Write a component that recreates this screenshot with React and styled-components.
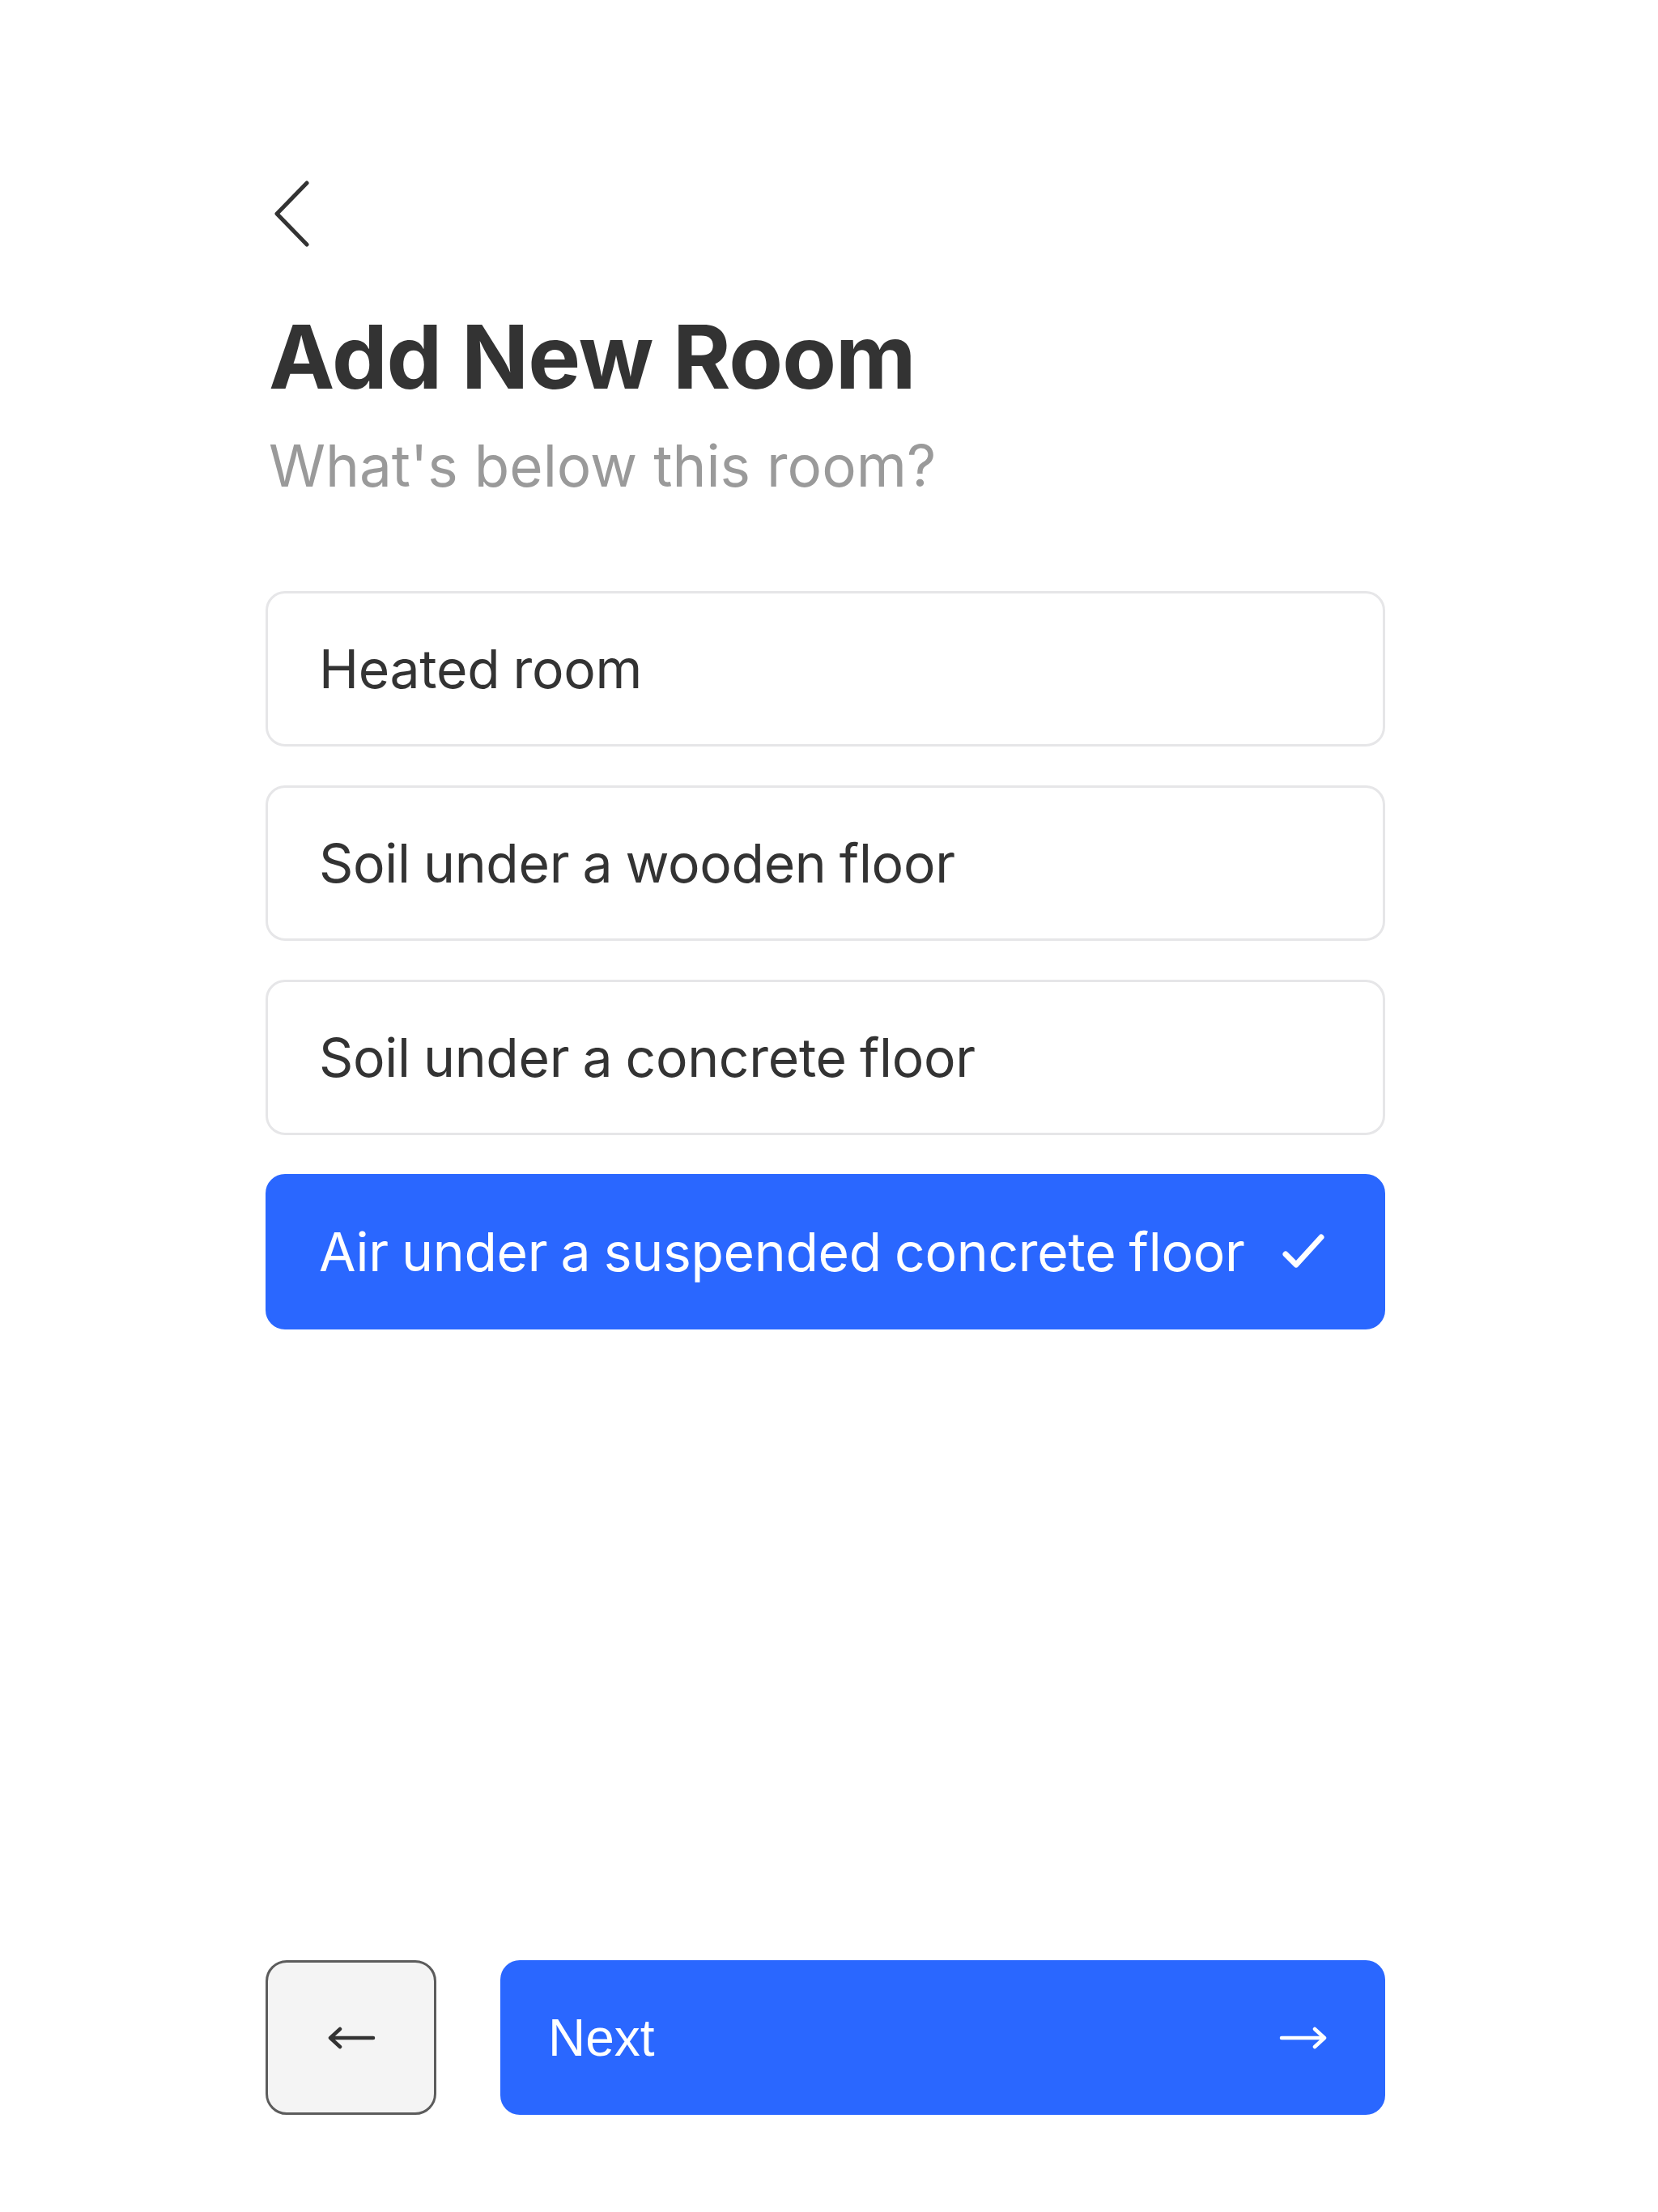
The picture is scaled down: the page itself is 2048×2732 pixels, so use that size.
import styled, { createGlobalStyle } from "styled-components";

const options = [
  "Heated room",
  "Soil under a wooden floor",
  "Soil under a concrete floor",
  "Air under a suspended concrete floor",
];

const selected = 3;

function ArrowIcon({ dir = "left", color }) {
  const d =
    dir === "left"
      ? "M4 14 H57 M16 3 L4 14 L16 25"
      : "M3 14 H56 M44 3 L56 14 L44 25";
  return (
    <svg width="60" height="28" viewBox="0 0 60 28" fill="none">
      <path
        d={d}
        stroke={color}
        strokeWidth="4.5"
        strokeLinecap="round"
        strokeLinejoin="round"
      />
    </svg>
  );
}

export default function App() {
  return (
    <>
      <GlobalStyle />
      <Page>
        <BackLink aria-label="Back">
          <svg width="52" height="84" viewBox="0 0 52 84" fill="none">
            <path
              d="M45 4 L8 42 L45 80"
              stroke="#333"
              strokeWidth="5"
              strokeLinecap="round"
              strokeLinejoin="round"
            />
          </svg>
        </BackLink>
        <Title>Add New Room</Title>
        <Subtitle>What's below this room?</Subtitle>
        <OptionList>
          {options.map((label, i) => (
            <Option key={label} $active={i === selected}>
              <span>{label}</span>
              {i === selected && (
                <svg width="56" height="50" viewBox="0 0 56 50" fill="none">
                  <path
                    d="M6 28 L19 41 L50 7"
                    stroke="#fff"
                    strokeWidth="7"
                    strokeLinecap="round"
                    strokeLinejoin="round"
                  />
                </svg>
              )}
            </Option>
          ))}
        </OptionList>
        <Footer>
          <PrevButton aria-label="Previous">
            <ArrowIcon dir="left" color="#333333" />
          </PrevButton>
          <NextButton>
            <span>Next</span>
            <ArrowIcon dir="right" color="#ffffff" />
          </NextButton>
        </Footer>
      </Page>
    </>
  );
}

const GlobalStyle = createGlobalStyle`
  body {
    margin: 0;
    background: #ffffff;
    font-family: "Inter", "Noto Sans", sans-serif;
  }
`;

const Page = styled.div`
  width: 2048px;
  min-height: 2732px;
  box-sizing: border-box;
  padding: 222px 337px 120px 328px;
  display: flex;
  flex-direction: column;
`;

const BackLink = styled.button`
  width: 52px;
  height: 84px;
  padding: 0;
  margin-left: 6px;
  border: none;
  background: none;
  display: flex;
`;

const Title = styled.h1`
  margin: 68px 0 0 4px;
  font-size: 109px;
  line-height: 132px;
  font-weight: 700;
  letter-spacing: -1px;
  color: #333333;
`;

const Subtitle = styled.p`
  margin: 24px 0 0 4px;
  font-size: 71px;
  line-height: 90px;
  font-weight: 400;
  color: #9a9a9a;
`;

const OptionList = styled.div`
  margin-top: 110px;
  display: flex;
  flex-direction: column;
  gap: 48px;
`;

const Option = styled.div`
  height: 192px;
  box-sizing: border-box;
  padding: 0 70px 0 63px;
  display: flex;
  align-items: center;
  justify-content: space-between;
  border-radius: 24px;
  border: 3px solid ${(p) => (p.$active ? "#2a67ff" : "#e6e6e8")};
  background: ${(p) => (p.$active ? "#2a67ff" : "#ffffff")};
  color: ${(p) => (p.$active ? "#ffffff" : "#333333")};
  font-size: 66px;
  font-weight: 400;
  letter-spacing: -0.3px;
  word-spacing: -2px;
`;

const Footer = styled.div`
  margin-top: auto;
  display: flex;
  gap: 79px;
  height: 191px;
`;

const PrevButton = styled.button`
  width: 211px;
  height: 191px;
  box-sizing: border-box;
  border: 3px solid #5c5c5c;
  border-radius: 26px;
  background: #f4f4f4;
  display: flex;
  align-items: center;
  justify-content: center;
  padding: 0;
`;

const NextButton = styled.button`
  flex: 1;
  height: 191px;
  border: none;
  border-radius: 24px;
  background: #2a67ff;
  color: #ffffff;
  font-family: "Liberation Sans", "DejaVu Sans", sans-serif;
  font-size: 64px;
  display: flex;
  align-items: center;
  justify-content: space-between;
  padding: 0 71px 0 59px;
`;
